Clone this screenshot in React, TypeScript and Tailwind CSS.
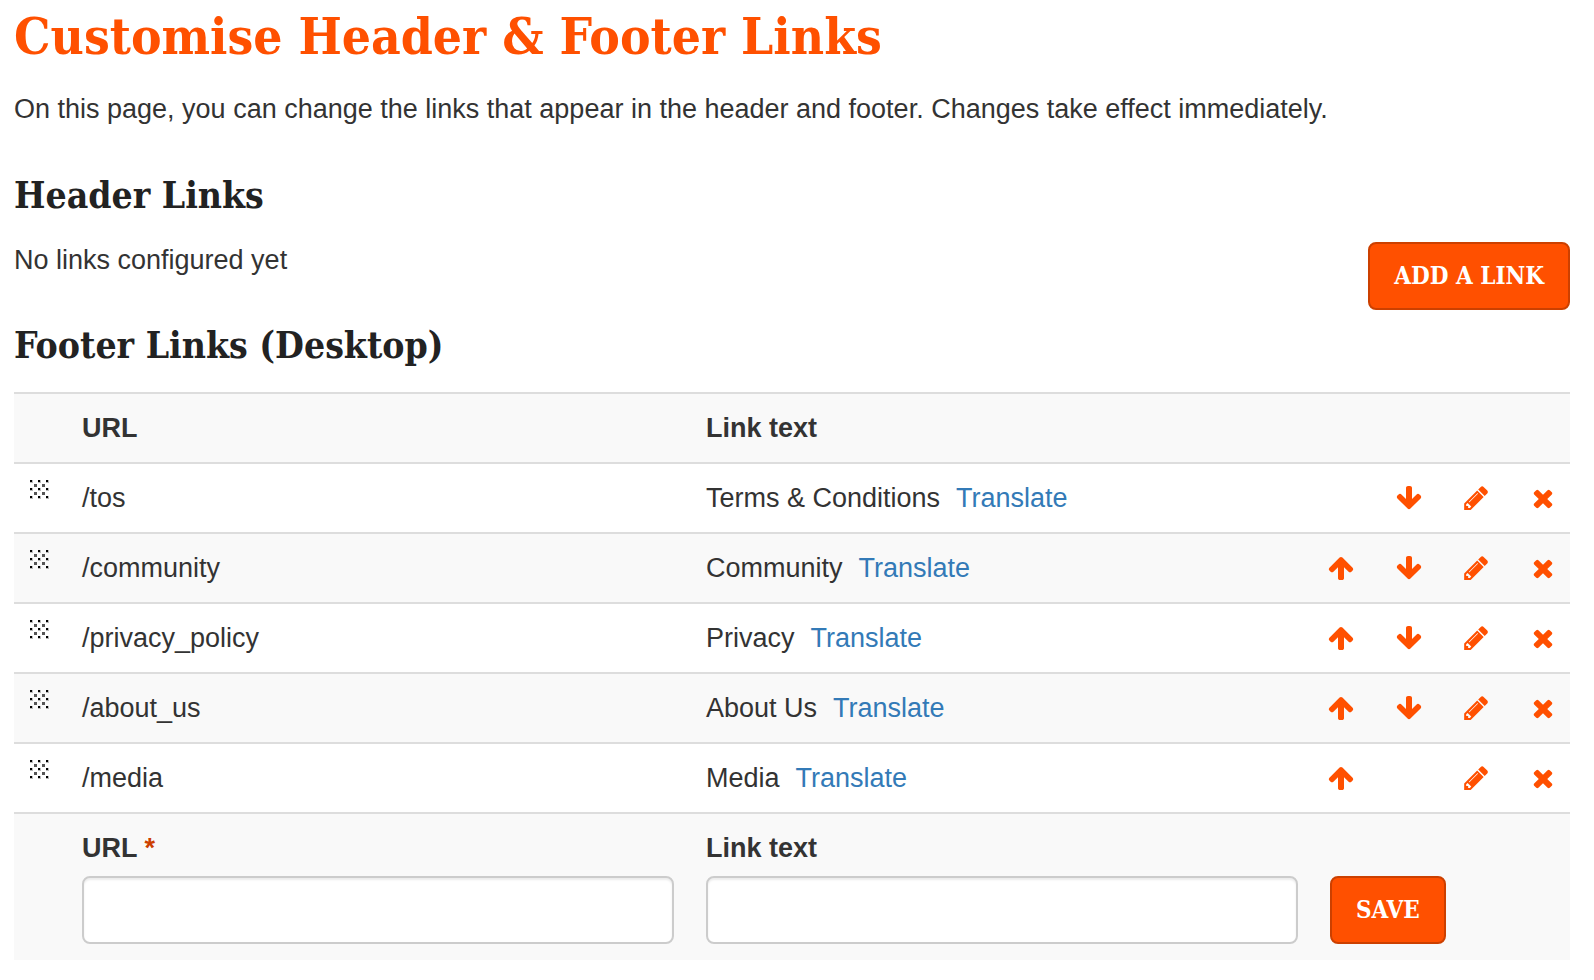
import React from "react";

interface FooterLink {
  url: string;
  text: string;
}

const footerLinks: FooterLink[] = [
  { url: "/tos", text: "Terms & Conditions" },
  { url: "/community", text: "Community" },
  { url: "/privacy_policy", text: "Privacy" },
  { url: "/about_us", text: "About Us" },
  { url: "/media", text: "Media" },
];

const icons = {
  up: "M1611 971q0 51-37 90l-75 75q-38 38-91 38-54 0-90-38l-294-293v704q0 52-37.500 84.500t-90.500 32.500h-128q-53 0-90.500-32.500t-37.500-84.500v-704l-294 293q-36 38-90 38t-90-38l-75-75q-38-38-38-90 0-53 38-91l651-651q35-37 90-37 54 0 91 37l651 651q37 39 37 91z",
  down: "M1675 832q0 53-37 90l-651 652q-39 37-91 37-53 0-90-37l-651-652q-38-36-38-90 0-53 38-91l74-75q39-37 91-37 53 0 90 37l294 294v-704q0-52 38-90t90-38h128q52 0 90 38t38 90v704l294-294q37-37 90-37 52 0 91 37l75 75q37 39 37 91z",
  edit: "M502 1536l91-91-235-235-91 91v107h128v128h107zm523-928q0-22-22-22-10 0-17 7l-542 542q-7 7-7 17 0 22 22 22 10 0 17-7l542-542q7-7 7-17zm-54-192l416 416-832 832h-416v-416zm683 96q0 53-37 90l-166 166-416-416 166-165q36-38 90-38 53 0 91 38l235 234q37 39 37 91z",
  remove:
    "M1490 1322q0 40-28 68l-136 136q-28 28-68 28t-68-28l-294-294-294 294q-28 28-68 28t-68-28l-136-136q-28-28-28-68t28-68l294-294-294-294q-28-28-28-68t28-68l136-136q28-28 68-28t68 28l294 294 294-294q28-28 68-28t68 28l136 136q28 28 28 68t-28 68l-294 294 294 294q28 28 28 68z",
};

const IconButton = ({
  icon,
  label,
}: {
  icon: keyof typeof icons;
  label: string;
}) => (
  <button
    type="button"
    aria-label={label}
    className="flex size-6 shrink-0 cursor-pointer items-center justify-center text-[#ff5000]"
  >
    <svg viewBox="0 0 1792 1792" className="size-7 shrink-0 fill-current">
      <path d={icons[icon]} />
    </svg>
  </button>
);

const DragHandle = () => (
  <svg viewBox="0 0 20 20" className="size-5 cursor-move">
    {[0, 8, 16].map((y) =>
      [0, 8, 16].map((x) => (
        <g key={`${x}-${y}`}>
          <rect x={x} y={y} width="3" height="3" className="fill-[#bbb]" />
          <rect x={x} y={y} width="2" height="2" />
        </g>
      ))
    )}
    {[4, 12].map((y) =>
      [4, 12].map((x) => (
        <rect
          key={`${x}-${y}`}
          x={x}
          y={y}
          width="3"
          height="3"
          className="fill-[#555]"
        />
      ))
    )}
  </svg>
);

const PrimaryButton = ({
  children,
  type = "button",
}: {
  children: React.ReactNode;
  type?: "button" | "submit";
}) => (
  <button
    type={type}
    className="h-[68px] cursor-pointer rounded-lg border-2 border-[#cc4000] bg-[#ff5000] px-6 font-['DejaVu_Serif_Condensed','DejaVu_Serif',serif] text-[24px] font-bold text-white uppercase"
  >
    {children}
  </button>
);

const inputClass =
  "mt-2.5 block h-[68px] w-full rounded-lg border-2 border-[#ccc] bg-white px-4 shadow-[inset_0_2px_2px_rgba(0,0,0,0.075)]";

const headingClass =
  "font-['DejaVu_Serif_Condensed','DejaVu_Serif',serif] text-[37px] leading-[44px] font-bold text-[#222]";

const App = () => {
  return (
    <main className="bg-white pr-6 pb-5 pl-3.5 font-['Liberation_Sans',Arial,sans-serif] text-[27px] leading-9 text-[#333]">
      <h1 className="pt-1 font-['DejaVu_Serif_Condensed','DejaVu_Serif',serif] text-[51px] leading-[64px] font-bold text-[#ff5000]">
        Customise Header &amp; Footer Links
      </h1>
      <p className="mt-[23px]">
        On this page, you can change the links that appear in the header and
        footer. Changes take effect immediately.
      </p>

      <section className="mt-[46px]">
        <h2 className={headingClass}>Header Links</h2>
        <div className="mt-[25px] flex items-start justify-between">
          <p>No links configured yet</p>
          <PrimaryButton>Add a link</PrimaryButton>
        </div>
      </section>

      <section className="mt-[13px]">
        <h2 className={headingClass}>Footer Links (Desktop)</h2>
        <form className="mt-[25px]" onSubmit={(e) => e.preventDefault()}>
          <table className="w-full table-fixed border-separate border-spacing-0 text-left [&_td]:border-t-2 [&_td]:border-[#ddd] [&_td]:p-4 [&_th]:border-t-2 [&_th]:border-[#ddd] [&_th]:p-4 [&_tr:nth-child(odd)]:bg-[#f9f9f9]">
            <colgroup>
              <col className="w-[52px]" />
              <col />
              <col />
              <col className="w-[256px]" />
            </colgroup>
            <tbody>
              <tr>
                <th />
                <th scope="col">URL</th>
                <th scope="col">Link text</th>
                <th />
              </tr>
              {footerLinks.map((link, i) => (
                <tr key={link.url}>
                  <td className="align-top">
                    <DragHandle />
                  </td>
                  <td>{link.url}</td>
                  <td>
                    {link.text}
                    <a href="#translate" className="ml-4 text-[#337ab7]">
                      Translate
                    </a>
                  </td>
                  <td>
                    <div className="flex items-center gap-[43px]">
                      {i > 0 ? (
                        <IconButton icon="up" label="Move up" />
                      ) : (
                        <span className="size-6 shrink-0" />
                      )}
                      {i < footerLinks.length - 1 ? (
                        <IconButton icon="down" label="Move down" />
                      ) : (
                        <span className="size-6 shrink-0" />
                      )}
                      <IconButton icon="edit" label="Edit" />
                      <IconButton icon="remove" label="Remove" />
                    </div>
                  </td>
                </tr>
              ))}
              <tr>
                <td />
                <td>
                  <label htmlFor="url" className="block font-bold">
                    URL <span className="text-[#cc4000]">*</span>
                  </label>
                  <input id="url" type="text" required className={inputClass} />
                </td>
                <td>
                  <label htmlFor="text" className="block font-bold">
                    Link text
                  </label>
                  <input id="text" type="text" className={inputClass} />
                </td>
                <td className="align-bottom">
                  <div className="flex">
                    <PrimaryButton type="submit">Save</PrimaryButton>
                  </div>
                </td>
              </tr>
            </tbody>
          </table>
        </form>
      </section>
    </main>
  );
};

export default App;
